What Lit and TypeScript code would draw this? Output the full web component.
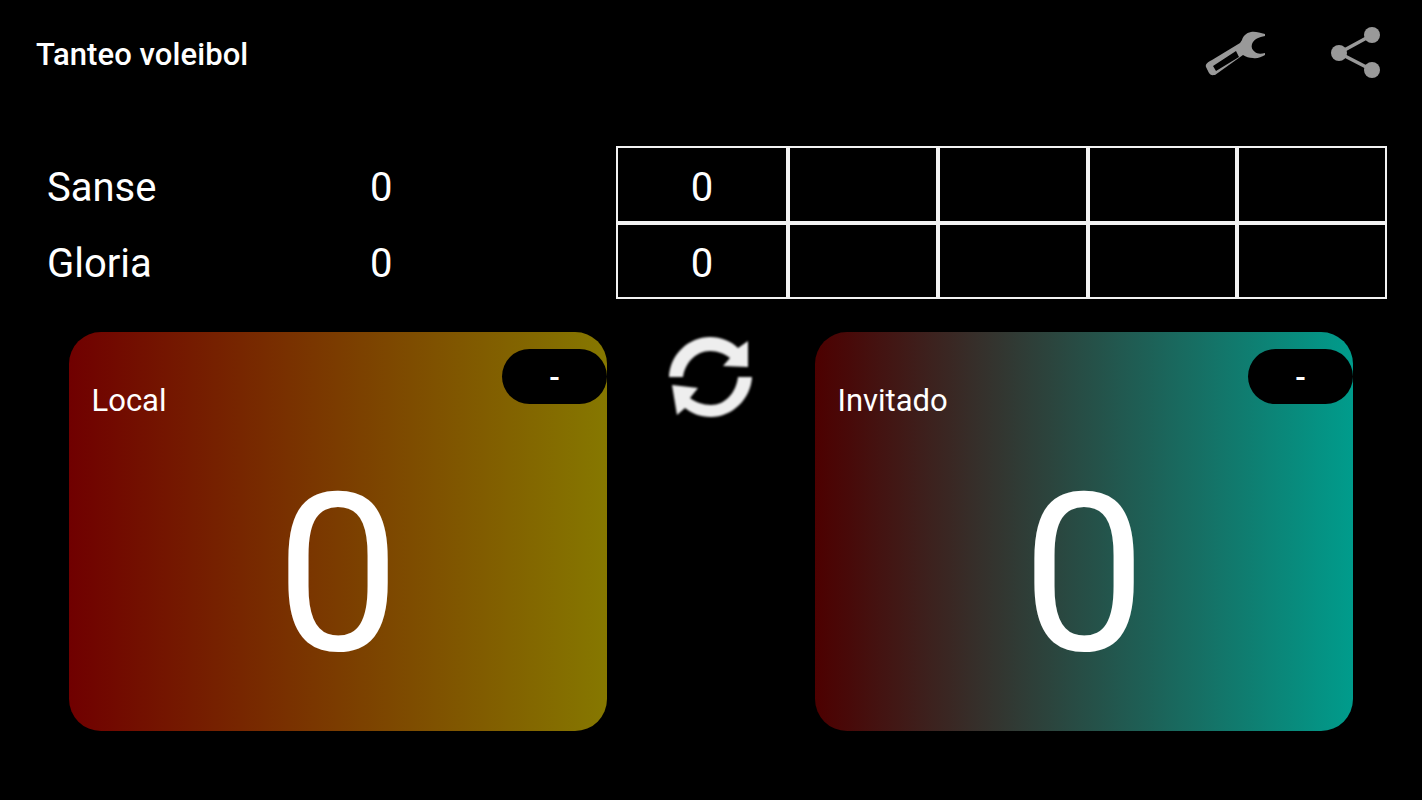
import { LitElement, html, css } from "lit";
import { customElement } from "lit/decorators.js";

@customElement("app-root")
export class AppRoot extends LitElement {
  static styles = css`
    :host { display: block; width: 1422px; height: 800px; background: #000; color: #fff; font-family: Roboto, "Liberation Sans", sans-serif; overflow: hidden; }
    .head { height: 108px; display: flex; align-items: center; padding: 0 36px; box-sizing: border-box; }
    .title { font-size: 31px; font-weight: 500; letter-spacing: 0.08px; flex: 1; }
    .wrench { width: 62px; height: 46px; display: block; margin-right: 63px; }
    .share { width: 52px; height: 56px; display: block; margin-right: 4px; }
    .mid { display: flex; height: 153px; margin-top: 38px; padding-left: 47px; }
    .names { width: 569px; display: grid; grid-template-columns: 323px 1fr; grid-auto-rows: 76px; align-items: center; font-size: 40px; padding-top: 3px; box-sizing: border-box; }
    .table { width: 771px; display: grid; grid-template-columns: 172px repeat(4, 149.75px); grid-template-rows: repeat(2, 76.5px); }
    .cell { border: 2px solid #f2f2f2; padding-top: 6px; display: flex; align-items: center; justify-content: center; font-size: 40px; box-sizing: border-box; }
    .bottom { display: flex; margin-top: 33px; padding-left: 69px; }
    .card { position: relative; width: 538px; height: 399px; border-radius: 32px; box-sizing: border-box; }
    .local { background: linear-gradient(90deg, #700000, #867800); }
    .guest { background: linear-gradient(90deg, #4d0000, #009c8c); }
    .label { position: absolute; left: 22.5px; top: 50px; font-size: 31px; }
    .pill { position: absolute; right: 0; top: 17px; width: 105px; height: 55px; padding-top: 2px; border-radius: 28px; background: #000; display: flex; align-items: center; justify-content: center; font-size: 31px; font-weight: 500; box-sizing: border-box; }
    .big { position: absolute; inset: 0; top: 107px; text-align: center; font-size: 221px; line-height: 272px; }
    .swap { width: 208px; display: flex; justify-content: center; align-items: flex-start; }
    .swap svg { width: 84px; height: 84px; margin-top: 4px; filter: blur(1px); }
  `;

  private card(kind: string, label: string) {
    return html`<div class="card ${kind}">
      <div class="label">${label}</div>
      <div class="pill">-</div>
      <div class="big">0</div>
    </div>`;
  }

  render() {
    const rows = [0, 1];
    return html`
      <div class="head">
        <div class="title">Tanteo voleibol</div>
        <svg class="wrench" viewBox="0 0 62 46">
          <path fill="#999" fill-rule="evenodd" d="M60 3 C55 2 50 0 46 1 C41 2 38 5 37 9 L35 12 L7 29 C3 31 0 33 1 36 L4 42 C6 45 8 44 10 44 L38 24 C41 26 44 27 48 27 C52 28 56 26 60 24 L60 22 C56 23 52 23 50 21 C47 19 46 16 47 13 C49 8 54 6 60 5 Z M8 35 L31 20 L34 26 L11 40 Z"/>
        </svg>
        <svg class="share" viewBox="0 0 52 56">
          <g fill="#999"><circle cx="42" cy="9" r="8"/><circle cx="9" cy="27" r="8"/><circle cx="42" cy="44" r="8"/></g>
          <path d="M42 9 L9 27 L42 44" fill="none" stroke="#999" stroke-width="3.5"/>
        </svg>
      </div>
      <div class="mid">
        <div class="names">
          <div>Sanse</div><div>0</div>
          <div>Gloria</div><div>0</div>
        </div>
        <div class="table">
          ${rows.map(() => html`<div class="cell">0</div><div class="cell"></div><div class="cell"></div><div class="cell"></div><div class="cell"></div>`)}
        </div>
      </div>
      <div class="bottom">
        ${this.card("local", "Local")}
        <div class="swap">
          <svg viewBox="0 0 84 84">
            <path fill="#eee" d="M0 41 C1 18 20 1 41 1 C52 1 62 5 69 12 L79 5 L79 31 L54 30 L61 22 C56 18 49 15 41 15 C27 15 16 27 14 41 Z"/>
            <path fill="#eee" d="M83 41 C82 63 63 81 42 81 C31 81 22 77 16 72 L8 79 L3 49 L29 52 L21 62 C26 66 34 69 42 69 C56 69 67 57 69 41 Z"/>
          </svg>
        </div>
        ${this.card("guest", "Invitado")}
      </div>
    `;
  }
}
